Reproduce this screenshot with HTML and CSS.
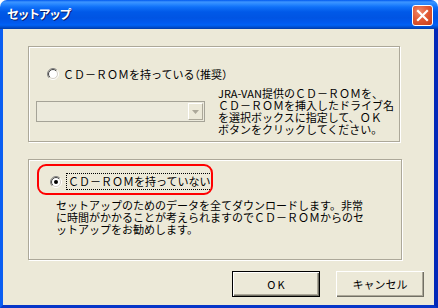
FILE: index.html
```html
<!DOCTYPE html>
<html lang="ja">
<head>
<meta charset="utf-8">
<title>セットアップ</title>
<link rel="stylesheet" href="styles.css">
</head>
<body>
<div class="window">
  <div class="titlebar">
    <span class="title">セットアップ</span>
    <span class="close">
      <svg width="19" height="19" viewBox="0 0 19 19"><path d="M5 5 L14 14 M14 5 L5 14" stroke="#fff" stroke-width="2.2" stroke-linecap="square"/></svg>
    </span>
  </div>
  <div class="frame">
    <div class="client">
      <div class="group g1">
        <div class="radio-row r1">
          <span class="radio">
            <svg width="12" height="12" viewBox="0 0 12 12">
              <defs>
                <linearGradient id="oa" x1="0" y1="0" x2="1" y2="1"><stop offset="0.45" stop-color="#808080"/><stop offset="0.55" stop-color="#ffffff"/></linearGradient>
                <linearGradient id="ob" x1="0" y1="0" x2="1" y2="1"><stop offset="0.45" stop-color="#404040"/><stop offset="0.55" stop-color="#d4d0c8"/></linearGradient>
              </defs>
              <circle cx="6" cy="6" r="5.5" fill="none" stroke="url(#oa)"/>
              <circle cx="6" cy="6" r="4.5" fill="#fff" stroke="url(#ob)"/>
            </svg>
          </span>
          <span class="label l1">ＣＤ－ＲＯＭを持っている（推奨）</span>
        </div>
        <div class="row2">
          <div class="combo">
            <span class="dd"><svg width="7" height="4" viewBox="0 0 7 4"><path d="M0 0 H7 L3.5 4 Z" fill="#aca899"/></svg></span>
          </div>
          <p class="desc d1">JRA-VAN提供のＣＤ－ＲＯＭを、<br>ＣＤ－ＲＯＭを挿入したドライブ名<br>を選択ボックスに指定して、ＯＫ<br>ボタンをクリックしてください。</p>
        </div>
      </div>
      <div class="group g2">
        <span class="highlight"></span>
        <div class="radio-row r2">
          <span class="radio">
            <svg width="12" height="12" viewBox="0 0 12 12">
              <defs>
                <linearGradient id="pa" x1="0" y1="0" x2="1" y2="1"><stop offset="0.45" stop-color="#808080"/><stop offset="0.55" stop-color="#ffffff"/></linearGradient>
                <linearGradient id="pb" x1="0" y1="0" x2="1" y2="1"><stop offset="0.45" stop-color="#404040"/><stop offset="0.55" stop-color="#d4d0c8"/></linearGradient>
              </defs>
              <circle cx="6" cy="6" r="5.5" fill="none" stroke="url(#pa)"/>
              <circle cx="6" cy="6" r="4.5" fill="#fff" stroke="url(#pb)"/>
              <circle cx="6" cy="6" r="2" fill="#000"/>
            </svg>
          </span>
          <span class="label focus">ＣＤ－ＲＯＭを持っていない</span>
        </div>
        <p class="desc d2">セットアップのためのデータを全てダウンロードします。非常<br>に時間がかかることが考えられますのでＣＤ－ＲＯＭからのセ<br>ットアップをお勧めします。</p>
      </div>
      <div class="buttons">
        <button class="btn default">OK</button>
        <button class="btn">キャンセル</button>
      </div>
    </div>
  </div>
</div>
</body>
</html>
```
FILE: styles.css
```css
html, body {
  margin: 0;
  padding: 0;
  background: #ffffff;
}
.window {
  width: 438px;
  height: 308px;
  display: flex;
  flex-direction: column;
  border-radius: 7px 7px 0 0;
  overflow: hidden;
  font-family: "Noto Sans CJK JP", sans-serif;
  font-size: 11px;
  color: #000;
}
.titlebar {
  height: 29px;
  flex: none;
  display: flex;
  align-items: flex-start;
  justify-content: space-between;
  background: linear-gradient(to bottom, #0058ee 0px, #3d95ff 2px, #2a89ff 4px, #0f70f8 7px, #0059e8 12px, #0054e3 18px, #005af0 23px, #0062f5 25px, #0050d4 27px, #003ca8 29px);
}
.title {
  margin: 6px 0 0 7px;
  font-size: 12px;
  line-height: 16px;
  font-weight: bold;
  letter-spacing: -1.5px;
  color: #fff;
  text-shadow: 1px 1px 0 #0a1e6a;
}
.close {
  margin: 5px 5px 0 0;
  width: 21px;
  height: 21px;
  box-sizing: border-box;
  border: 1px solid #fff;
  border-radius: 3px;
  background: radial-gradient(circle at 35% 30%, #f08a6c 0%, #e25a35 45%, #c73c18 100%);
  display: flex;
  align-items: center;
  justify-content: center;
}
.close svg { display: block; }
.frame {
  flex: 1;
  display: flex;
  border-left: 3px solid #0a5ef2;
  border-right: 4px solid #0328b8;
  border-bottom: 3px solid #0736c8;
}
.client {
  flex: 1;
  background: #ece9d8;
  display: flex;
  flex-direction: column;
}
.group {
  box-sizing: border-box;
  border: 1px solid #aca899;
  box-shadow: inset 1px 1px 0 #fff, 1px 1px 0 #fff;
  margin-left: 25px;
  position: relative;
}
.g1 {
  margin-top: 17px;
  width: 372px;
  height: 96px;
}
.g2 {
  margin-top: 17px;
  width: 374px;
  height: 101px;
}
.radio-row {
  display: flex;
  align-items: center;
}
.radio {
  width: 12px;
  height: 12px;
  flex: none;
}
.radio svg { display: block; }
.label {
  line-height: 12px;
  white-space: nowrap;
}
.r1 {
  margin: 21px 0 0 18px;
  height: 12px;
}
.r1 .label {
  margin-left: 4px;
  font-feature-settings: "halt";
}
.row2 {
  display: flex;
  align-items: flex-start;
  margin-top: 7px;
}
.combo {
  margin: 14px 0 0 7px;
  width: 169px;
  height: 21px;
  box-sizing: border-box;
  border: 1px solid #a5a397;
  background: #eceadc;
  display: flex;
  justify-content: flex-end;
  padding: 1px;
}
.dd {
  width: 15px;
  height: 17px;
  box-sizing: border-box;
  background: #ece9d8;
  border: 1px solid;
  border-color: #fff #aca899 #aca899 #fff;
  display: flex;
  align-items: center;
  justify-content: center;
}
.dd svg { display: block; }
.desc {
  margin: 0;
  line-height: 12px;
  white-space: nowrap;
}
.d1 {
  margin-left: 13px;
}
.r2 {
  margin: 13px 0 0 21px;
  height: 17px;
}
.focus {
  margin-left: 4px;
  border: 1px dotted #000;
  padding: 0 1px;
  line-height: 15px;
}
.d2 {
  margin: 9px 0 0 27px;
}
.highlight {
  position: absolute;
  left: 8px;
  top: 4px;
  width: 176px;
  height: 31px;
  box-sizing: border-box;
  border: 2px solid #ff0000;
  border-radius: 9px;
}
.buttons {
  margin-top: 11px;
  display: flex;
  justify-content: flex-end;
  gap: 16px;
  padding-right: 10px;
}
.btn {
  width: 88px;
  height: 26px;
  box-sizing: border-box;
  padding: 0;
  margin: 0;
  font-family: "Noto Sans CJK JP", sans-serif;
  font-size: 11px;
  line-height: 12px;
  color: #000;
  background: #ece9d8;
  border: none;
  box-shadow: inset 1px 1px 0 #fff, inset -1px -1px 0 #716f64, inset -2px -2px 0 #aca899;
}
.default {
  border: 1px solid #000;
  letter-spacing: 2px;
  text-indent: 2px;
}
```
